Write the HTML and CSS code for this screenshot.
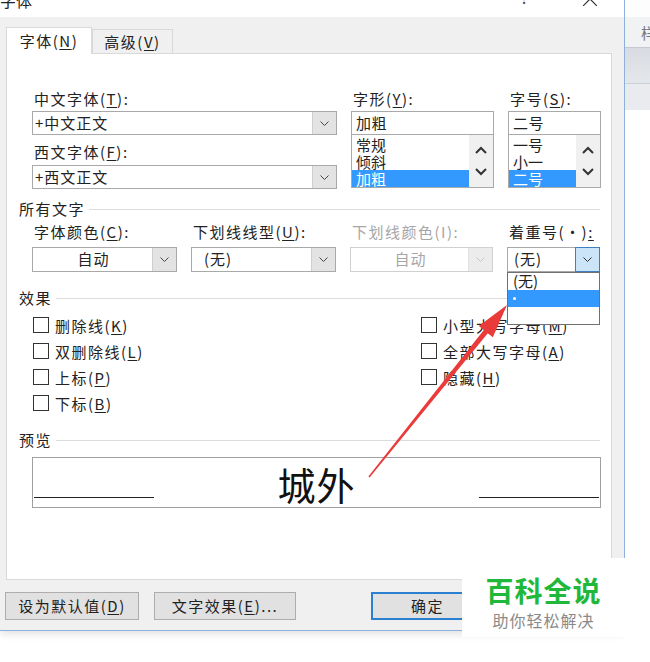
FILE: index.html
```html
<!DOCTYPE html>
<html lang="zh-CN">
<head>
    <meta charset="UTF-8">
    <meta name="viewport" content="width=device-width, initial-scale=1.0">
    <title>字体</title>
    <link rel="stylesheet" href="styles.css">
</head>
<body>
<div class="screen">
    <div class="dialog">
        <div class="titlebar">
            <span class="title">字体</span>
            <span class="title-btns">
                <span class="help">?</span>
                <svg class="close" width="14" height="14" viewBox="0 0 14 14"><path d="M0 0L14 14M14 0L0 14" stroke="#333" stroke-width="1.2" fill="none"/></svg>
            </span>
        </div>

        <div class="dialog-body">
            <div class="tabs">
                <div class="tab active">字体(<u>N</u>)</div>
                <div class="tab">高级(<u>V</u>)</div>
            </div>

            <div class="panel">
                <div class="font-grid">
                    <div class="col">
                        <div class="label">中文字体(<u>T</u>):</div>
                        <div class="combo">
                            <span class="combo-text">+中文正文</span>
                            <span class="combo-btn"><svg width="9" height="5" viewBox="0 0 9 5"><polyline points="0.5,0.5 4.5,4.5 8.5,0.5" stroke="#444" fill="none"/></svg></span>
                        </div>
                        <div class="label second">西文字体(<u>F</u>):</div>
                        <div class="combo">
                            <span class="combo-text">+西文正文</span>
                            <span class="combo-btn"><svg width="9" height="5" viewBox="0 0 9 5"><polyline points="0.5,0.5 4.5,4.5 8.5,0.5" stroke="#444" fill="none"/></svg></span>
                        </div>
                    </div>

                    <div class="col">
                        <div class="label">字形(<u>Y</u>):</div>
                        <div class="textbox">加粗</div>
                        <div class="listbox">
                            <div class="items">
                                <div>常规</div>
                                <div>倾斜</div>
                                <div class="sel">加粗</div>
                            </div>
                            <div class="scroll">
                                <svg width="12" height="8" viewBox="0 0 12 8"><polyline points="1,7 6,2 11,7" stroke="#333" stroke-width="2" fill="none"/></svg>
                                <svg width="12" height="8" viewBox="0 0 12 8"><polyline points="1,1 6,6 11,1" stroke="#333" stroke-width="2" fill="none"/></svg>
                            </div>
                        </div>
                    </div>

                    <div class="col">
                        <div class="label">字号(<u>S</u>):</div>
                        <div class="textbox">二号</div>
                        <div class="listbox">
                            <div class="items">
                                <div>一号</div>
                                <div>小一</div>
                                <div class="sel">二号</div>
                            </div>
                            <div class="scroll">
                                <svg width="12" height="8" viewBox="0 0 12 8"><polyline points="1,7 6,2 11,7" stroke="#333" stroke-width="2" fill="none"/></svg>
                                <svg width="12" height="8" viewBox="0 0 12 8"><polyline points="1,1 6,6 11,1" stroke="#333" stroke-width="2" fill="none"/></svg>
                            </div>
                        </div>
                    </div>
                </div>

                <div class="section">所有文字</div>
                <div class="color-row">
                    <div>
                        <div class="label">字体颜色(<u>C</u>):</div>
                        <div class="combo tall">
                            <span class="combo-text center">自动</span>
                            <span class="combo-btn"><svg width="9" height="5" viewBox="0 0 9 5"><polyline points="0.5,0.5 4.5,4.5 8.5,0.5" stroke="#444" fill="none"/></svg></span>
                        </div>
                    </div>
                    <div>
                        <div class="label">下划线线型(<u>U</u>):</div>
                        <div class="combo tall">
                            <span class="combo-text pad">(无)</span>
                            <span class="combo-btn"><svg width="9" height="5" viewBox="0 0 9 5"><polyline points="0.5,0.5 4.5,4.5 8.5,0.5" stroke="#444" fill="none"/></svg></span>
                        </div>
                    </div>
                    <div>
                        <div class="label muted">下划线颜色(I):</div>
                        <div class="combo tall disabled">
                            <span class="combo-text center">自动</span>
                            <span class="combo-btn"><svg width="9" height="5" viewBox="0 0 9 5"><polyline points="0.5,0.5 4.5,4.5 8.5,0.5" stroke="#c4c4c4" fill="none"/></svg></span>
                        </div>
                    </div>
                    <div class="drop-wrap">
                        <div class="label">着重号(·)<u>:</u></div>
                        <div class="combo tall">
                            <span class="combo-text pad-s">(无)</span>
                            <span class="combo-btn focus"><svg width="9" height="5" viewBox="0 0 9 5"><polyline points="0.5,0.5 4.5,4.5 8.5,0.5" stroke="#333" fill="none"/></svg></span>
                        </div>
                        <div class="drop-list">
                            <div class="drop-item">(无)</div>
                            <div class="drop-item sel"><span class="dot"></span></div>
                            <div class="drop-item"></div>
                        </div>
                    </div>
                </div>

                <div class="section effects">效果</div>
                <div class="checks">
                    <div class="check"><span class="box"></span>删除线(<u>K</u>)</div>
                    <div class="check"><span class="box"></span>双删除线(<u>L</u>)</div>
                    <div class="check"><span class="box"></span>上标(<u>P</u>)</div>
                    <div class="check"><span class="box"></span>下标(<u>B</u>)</div>
                    <div class="check"><span class="box"></span>小型大写字母(<u>M</u>)</div>
                    <div class="check"><span class="box"></span>全部大写字母(<u>A</u>)</div>
                    <div class="check"><span class="box"></span>隐藏(<u>H</u>)</div>
                </div>

                <div class="section preview-head">预览</div>
                <div class="preview">
                    <span class="pv-line"></span>
                    <span class="pv-text">城外</span>
                    <span class="pv-line"></span>
                </div>
            </div>

            <div class="buttons">
                <div class="btn w1">设为默认值(<u>D</u>)</div>
                <div class="btn w2">文字效果(<u>E</u>)...</div>
                <div class="btn ok">确定</div>
            </div>
        </div>
    </div>

    <div class="side">
        <div class="side-top"></div>
        <div class="side-tab">样</div>
        <div class="side-band"></div>
        <div class="side-band2"></div>
        <div class="side-rest"></div>
    </div>

    <div class="watermark">
        <div class="wm-title">百科全说</div>
        <div class="wm-sub">助你轻松解决</div>
    </div>

    <svg class="arrow" width="650" height="662" viewBox="0 0 650 662">
        <polygon points="368.4,476.5 483.8,330.0 478.8,326.0 507,305 492.8,337.2 487.8,333.2 369.6,477.5" fill="#ea3a3a"/>
    </svg>
</div>
</body>
</html>
```

FILE: styles.css
```css
* {
    box-sizing: border-box;
}

body {
    margin: 0;
    background: #fff;
    font-family: "Noto Sans CJK SC", "Noto Sans", sans-serif;
    font-size: 15px;
    color: #222;
}

u {
    text-underline-offset: 2px;
}

.screen {
    position: relative;
    display: flex;
    width: 650px;
    height: 662px;
    overflow: hidden;
}

/* dialog frame */
.dialog {
    width: 625px;
    height: 631px;
    flex-shrink: 0;
    background: #f0f0f0;
    border-right: 1px solid #8db1dc;
    border-bottom: 1px solid #8db1dc;
    box-shadow: 0 3px 8px rgba(0, 0, 0, 0.12);
}

.titlebar {
    height: 17px;
    background: #fff;
    display: flex;
    justify-content: space-between;
    overflow: hidden;
}

.title {
    margin-top: -10px;
    line-height: 20px;
    font-size: 16px;
}

.title-btns {
    display: flex;
    align-items: flex-start;
    padding-right: 27px;
}

.help {
    margin-top: -13px;
    margin-right: 55px;
    font-size: 16px;
    line-height: 20px;
    color: #444;
}

.close {
    margin-top: -8px;
}

.dialog-body {
    padding: 10px 12px 0 6px;
}

/* tabs */
.tabs {
    display: flex;
    align-items: flex-end;
    height: 26px;
}

.tab {
    width: 81px;
    height: 24px;
    line-height: 23px;
    text-align: center;
    letter-spacing: 1.5px;
    background: #f0f0f0;
    border: 1px solid #d9d9d9;
    border-bottom: none;
}

.tab.active {
    width: 86px;
    height: 27px;
    line-height: 26px;
    margin-bottom: -1px;
    background: #fff;
    position: relative;
    z-index: 1;
}

.panel {
    height: 527px;
    background: #fff;
    border: 1px solid #d9d9d9;
    padding: 35px 10px 0 12px;
}

.label {
    height: 20px;
    line-height: 20px;
    padding-left: 2px;
    margin-bottom: 2px;
    letter-spacing: 1.5px;
    white-space: nowrap;
}

.label.second {
    margin-top: 7px;
    margin-bottom: 3px;
}

.label.muted {
    color: #a6a6a6;
}

/* font / style / size */
.font-grid {
    display: grid;
    grid-template-columns: 305px 143px 93px;
    column-gap: 14px;
    margin-left: 13px;
}

.combo {
    height: 24px;
    display: flex;
    background: #fff;
    border: 1px solid #a9a9a9;
}

.combo.tall {
    height: 25px;
}

.combo-text {
    flex: 1;
    padding-left: 2px;
    line-height: 22px;
    letter-spacing: 1px;
    white-space: nowrap;
}

.combo-text.center {
    text-align: center;
}

.combo-text.pad {
    padding-left: 12px;
}

.combo-text.pad-s {
    padding-left: 6px;
}

.combo-btn {
    width: 24px;
    display: flex;
    align-items: center;
    justify-content: center;
    background: #e3e3e3;
    border-left: 1px solid #cfcfcf;
}

.combo-btn.focus {
    background: #cce4f7;
    border: 1px solid #3d7fbf;
    margin: -1px -1px -1px 0;
    width: 25px;
}

.combo.disabled {
    border-color: #d0d0d0;
    color: #a6a6a6;
}

.combo.disabled .combo-btn {
    background: #ececec;
    border-left-color: #e0e0e0;
}

.textbox {
    height: 24px;
    line-height: 22px;
    padding-left: 4px;
    border: 1px solid #a9a9a9;
    letter-spacing: 0.5px;
}

.listbox {
    height: 54px;
    margin-top: -1px;
    display: flex;
    border: 1px solid #a9a9a9;
}

.items {
    flex: 1;
    padding-top: 1px;
    line-height: 17px;
}

.items div {
    height: 17px;
    padding-left: 4px;
}

.items .sel {
    background: #3399ff;
    color: #fff;
}

.scroll {
    width: 24px;
    display: flex;
    flex-direction: column;
    align-items: center;
    justify-content: center;
    gap: 14px;
    background: #f0f0f0;
}

/* group headers */
.section {
    display: flex;
    align-items: center;
    height: 20px;
    line-height: 20px;
    margin-top: 10px;
    letter-spacing: 1.5px;
}

.section::after {
    content: "";
    flex: 1;
    height: 1px;
    margin-left: 4px;
    margin-right: 1px;
    background: #dcdcdc;
}

.section.effects {
    margin-top: 16px;
}

.section.preview-head {
    margin-top: 14px;
}

/* colour / underline row */
.color-row {
    display: grid;
    grid-template-columns: 145px 145px 143px 93px;
    column-gap: 14px;
    margin: 3px 0 0 13px;
}

.color-row .label {
    margin-bottom: 5px;
}

.drop-wrap {
    position: relative;
}

.drop-list {
    position: absolute;
    top: 100%;
    left: 0;
    right: 0;
    z-index: 2;
    background: #fff;
    border: 1px solid #707070;
}

.drop-item {
    height: 17px;
    line-height: 15px;
    padding-left: 5px;
}

.drop-item.sel {
    background: #3399ff;
    display: flex;
    align-items: center;
}

.dot {
    width: 3px;
    height: 3px;
    background: #fff;
    border-radius: 50%;
}

/* checkboxes */
.checks {
    display: grid;
    grid-template-columns: 388px auto;
    grid-template-rows: repeat(4, 26px);
    grid-auto-flow: column;
    margin: 4px 0 0 14px;
}

.check {
    display: flex;
    align-items: center;
    letter-spacing: 1.5px;
    white-space: nowrap;
}

.box {
    width: 16px;
    height: 16px;
    margin-right: 6px;
    border: 1px solid #333;
    background: #fff;
}

/* preview */
.preview {
    height: 51px;
    margin: 7px 0 0 13px;
    border: 1px solid #a0a0a0;
    display: flex;
    justify-content: space-between;
    align-items: flex-end;
}

.pv-line {
    width: 120px;
    margin: 0 1px 9px;
    border-bottom: 1.5px solid #222;
}

.pv-text {
    font-size: 38px;
    line-height: 38px;
    margin-bottom: 4px;
    letter-spacing: 1px;
    color: #111;
}

/* bottom buttons */
.buttons {
    display: flex;
    margin: 12px 0 0 -1px;
    height: 28px;
}

.btn {
    height: 28px;
    line-height: 26px;
    text-align: center;
    letter-spacing: 1.5px;
    background: #e1e1e1;
    border: 1px solid #adadad;
    white-space: nowrap;
}

.btn.w1 {
    width: 134px;
}

.btn.w2 {
    width: 142px;
    margin-left: 15px;
}

.btn.ok {
    width: 113px;
    margin-left: 75px;
    border: 2px solid #2a7fd0;
    line-height: 24px;
}

/* window behind the dialog */
.side {
    flex: 1;
    display: flex;
    flex-direction: column;
    background: #fff;
}

.side-top {
    height: 17px;
    background: #fdfdfd;
}

.side-tab {
    height: 31px;
    padding-left: 16px;
    line-height: 31px;
    font-size: 15px;
    color: #777;
    background: #f1f2f4;
    border-bottom: 1px solid #c5cad1;
    overflow: hidden;
}

.side-band {
    height: 36px;
    background: linear-gradient(#d8dce2, #e4e7eb);
    border-bottom: 1px solid #cdd1d7;
}

.side-band2 {
    height: 26px;
    background: #e9ebee;
}

.side-rest {
    flex: 1;
    background: #fff;
}

/* overlays */
.watermark {
    position: absolute;
    left: 462px;
    top: 558px;
    width: 163px;
    height: 79px;
    padding-top: 15px;
    background: #fff;
    text-align: center;
}

.wm-title {
    font-size: 28px;
    line-height: 34px;
    font-weight: bold;
    letter-spacing: 1px;
    color: #1fb83a;
}

.wm-sub {
    margin-top: 3px;
    font-size: 16px;
    line-height: 20px;
    letter-spacing: 1px;
    color: #8a8a8a;
}

.arrow {
    position: absolute;
    left: 0;
    top: 0;
    pointer-events: none;
}
```
